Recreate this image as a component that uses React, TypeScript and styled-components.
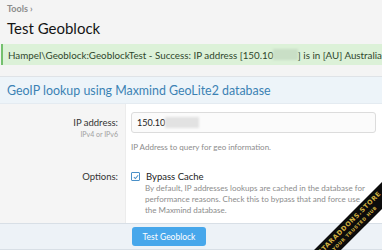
import React from "react";
import styled, { createGlobalStyle } from "styled-components";

const Global = createGlobalStyle`
  html, body { margin: 0; padding: 0; }
  body {
    background: #f4f4f4;
    font-family: Lato, "Noto Sans", sans-serif;
    width: 382px;
    height: 250px;
    overflow: hidden;
  }
`;

const Page = styled.div`
  position: relative;
  width: 382px;
  height: 250px;
  overflow: hidden;
  display: flex;
  flex-direction: column;
`;

const Crumbs = styled.div`
  padding: 3px 7px 0;
  height: 14px;
  font-size: 9px;
  font-weight: 700;
  color: #8c8c8c;
  line-height: 12px;
`;

const Title = styled.h1`
  margin: 0;
  padding: 0 7px;
  height: 25px;
  font-size: 15px;
  font-weight: 400;
  color: #141414;
  line-height: 23px;
`;

const Success = styled.div`
  margin: 2px 0 0 1px;
  height: 21px;
  display: flex;
  align-items: center;
  background: #dcf1d8;
  border-left: 2px solid #74c06e;
  padding-left: 5px;
  font-size: 9.8px;
  color: #2f472c;
  white-space: nowrap;
`;

const Blur = styled.span<{ $w: number; $bg: string }>`
  display: inline-block;
  width: ${(p) => p.$w}px;
  height: 11px;
  vertical-align: middle;
  background: ${(p) => p.$bg};
  filter: blur(1px);
`;

const Block = styled.div`
  margin-top: 11px;
  border-top: 1px solid #dfe3e7;
  background: #fff;
  display: flex;
  flex-direction: column;
`;

const BlockHeader = styled.h2`
  margin: 0;
  height: 26px;
  display: flex;
  align-items: center;
  padding-left: 7px;
  font-size: 12.4px;
  font-weight: 400;
  color: #3b82b4;
  background: #edf4f9;
  border-bottom: 1px solid #e4ebf1;
`;

const Row = styled.div<{ $h: number }>`
  display: grid;
  grid-template-columns: 126px 1fr;
  height: ${(p) => p.$h}px;
`;

const Label = styled.div<{ $pt: number }>`
  background: #f5f5f5;
  border-right: 1px solid #ececec;
  padding: ${(p) => p.$pt}px 7px 0 0;
  display: flex;
  flex-direction: column;
  align-items: flex-end;
`;

const LabelText = styled.span`
  font-size: 9.5px;
  color: #333;
  line-height: 13px;
`;

const LabelHint = styled.span`
  font-size: 7px;
  color: #a0a0a0;
  line-height: 10px;
`;

const Field = styled.div<{ $pt: number }>`
  padding: ${(p) => p.$pt}px 6px 0 5px;
  display: flex;
  flex-direction: column;
`;

const Input = styled.div`
  height: 21px;
  border: 1px solid #dcdcdc;
  border-radius: 3px;
  background: #fbfbfb;
  display: flex;
  align-items: center;
  padding-left: 5px;
  font-size: 9px;
  color: #222;
  box-sizing: border-box;
`;

const Explain = styled.div`
  margin-top: 9px;
  font-size: 8px;
  color: #8c8c8c;
  line-height: 11px;
`;

const CheckRow = styled.div`
  display: flex;
  align-items: center;
  gap: 6px;
  font-size: 9.5px;
  color: #222;
  line-height: 13px;
`;

const Box = styled.span`
  width: 7px;
  height: 7px;
  border: 1px solid #4a90c8;
  border-radius: 1px;
  display: inline-flex;
  align-items: center;
  justify-content: center;
  background: #fff;
`;

const CheckHint = styled.div`
  padding-left: 14px;
  font-size: 8px;
  color: #8c8c8c;
  line-height: 11px;
  white-space: nowrap;
`;

const Footer = styled.div`
  display: grid;
  grid-template-columns: 126px 1fr;
  height: 25px;
  background: #edf2f7;
  border-top: 1px solid #d8dfe6;
  border-bottom: 1px solid #d8dfe6;
  align-items: center;
`;

const Button = styled.button`
  grid-column: 2;
  margin-left: 6px;
  width: 74px;
  height: 19px;
  border: none;
  border-radius: 3px;
  background: #47a7eb;
  color: #fff;
  font-family: inherit;
  font-size: 8.5px;
  padding: 0;
`;

const Ribbon = styled.div`
  position: absolute;
  right: -50px;
  bottom: 15px;
  width: 160px;
  height: 19px;
  background: #0c0c0c;
  transform: rotate(-45deg);
  display: flex;
  flex-direction: column;
  align-items: center;
  justify-content: center;
  color: #d1b040;
  font-family: "DejaVu Sans", sans-serif;
  font-weight: 700;
  line-height: 7px;
`;

const RibbonBig = styled.span`
  font-size: 6.5px;
  letter-spacing: 0.6px;
`;

const RibbonSmall = styled.span`
  font-size: 4.5px;
  letter-spacing: 0.6px;
`;

export default function App() {
  return (
    <Page>
      <Global />
      <Crumbs>Tools ›</Crumbs>
      <Title>Test Geoblock</Title>
      <Success>
        Hampel\Geoblock:GeoblockTest - Success: IP address [150.10
        <Blur $w={34} $bg="#c9dfc6" />] is in [AU] Australia
      </Success>
      <Block>
        <BlockHeader>GeoIP lookup using Maxmind GeoLite2 database</BlockHeader>
        <Row $h={54}>
          <Label $pt={12}>
            <LabelText>IP address:</LabelText>
            <LabelHint>IPv4 or IPv6</LabelHint>
          </Label>
          <Field $pt={8}>
            <Input>
              150.10
              <Blur $w={34} $bg="#e2e2e2" />
            </Input>
            <Explain>IP Address to query for geo information.</Explain>
          </Field>
        </Row>
        <Row $h={65}>
          <Label $pt={12}>
            <LabelText>Options:</LabelText>
          </Label>
          <Field $pt={12}>
            <CheckRow>
              <Box>
                <svg width="6" height="6" viewBox="0 0 7 7">
                  <path d="M1 3.6 L2.8 5.3 L6 1.5" fill="none" stroke="#4a90c8" strokeWidth="1.2" />
                </svg>
              </Box>
              Bypass Cache
            </CheckRow>
            <CheckHint>
              By default, IP addresses lookups are cached in the database for
              <br />
              performance reasons. Check this to bypass that and force use
              <br />
              the Maxmind database.
            </CheckHint>
          </Field>
        </Row>
        <Footer>
          <Button>Test Geoblock</Button>
        </Footer>
      </Block>
      <Ribbon>
        <RibbonBig>STARADDONS.STORE</RibbonBig>
        <RibbonSmall>YOUR TRUSTED HUB</RibbonSmall>
      </Ribbon>
    </Page>
  );
}
